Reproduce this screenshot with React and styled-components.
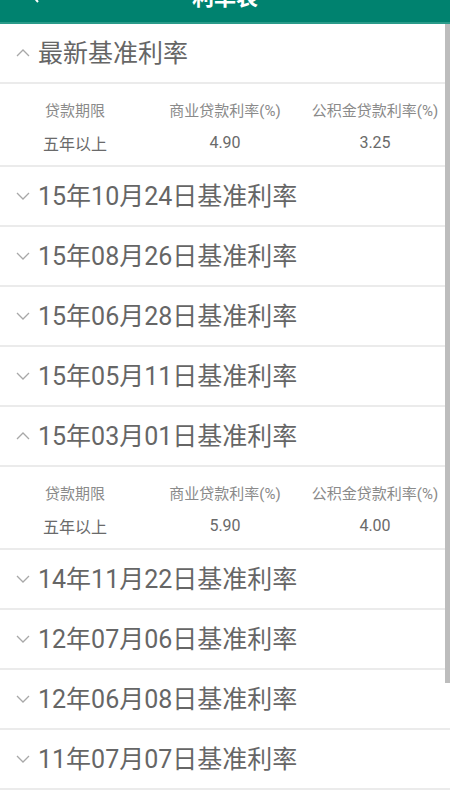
import React from 'react';
import styled, { createGlobalStyle } from 'styled-components';

const GlobalStyle = createGlobalStyle`
  html, body {
    margin: 0;
    padding: 0;
    background: #fff;
  }
  body {
    font-family: Roboto, 'Noto Sans CJK SC', sans-serif;
    overflow: hidden;
  }
`;

const Page = styled.div`
  position: relative;
  width: 450px;
  height: 800px;
  overflow: hidden;
  background: #fff;
`;

// the bar is scrolled mostly out of view, only its bottom shows
const TopBar = styled.div`
  height: 54px;
  margin-top: -32px;
  background: #00826f;
  border-bottom: 2px solid #2a9b8a;
  display: flex;
  align-items: center;
  justify-content: center;
  position: relative;
`;

const TopTitle = styled.div`
  color: #fff;
  font-size: 22px;
  font-weight: 700;
`;

const BackArrow = styled.svg`
  position: absolute;
  left: 30px;
  top: 19px;
`;

const List = styled.div`
  display: flex;
  flex-direction: column;
`;

const GroupHead = styled.div`
  height: 58px;
  display: flex;
  align-items: center;
  padding-left: 16px;
  gap: 8px;
  border-bottom: 2px solid #ebebeb;
`;

const HeadText = styled.span`
  font-size: 25px;
  color: #666;
  line-height: 1;
`;

const Table = styled.div`
  height: 83px;
  display: grid;
  grid-template-columns: 1fr 1fr 1fr;
  grid-template-rows: 33px 33px;
  align-content: start;
  padding-top: 9px;
  box-sizing: border-box;
  border-bottom: 2px solid #ebebeb;
`;

const Cell = styled.div`
  display: flex;
  align-items: center;
  justify-content: center;
  font-size: ${p => (p.head ? '15px' : '16px')};
  color: ${p => (p.head ? '#8a8a8a' : '#6a6a6a')};
  white-space: nowrap;
`;

const Scrollbar = styled.div`
  position: absolute;
  right: 0;
  top: 24px;
  width: 5px;
  height: 659px;
  background: #bdbdbd;
`;

const Chevron = ({ open }) => (
  <svg width="14" height="8" viewBox="0 0 14 8" style={{ flex: 'none' }}>
    <path
      d={open ? 'M1 7 L7 1 L13 7' : 'M1 1 L7 7 L13 1'}
      fill="none"
      stroke="#a8a8a8"
      strokeWidth="1.3"
    />
  </svg>
);

const groups = [
  { title: '最新基准利率', open: true, biz: '4.90', fund: '3.25' },
  { title: '15年10月24日基准利率' },
  { title: '15年08月26日基准利率' },
  { title: '15年06月28日基准利率' },
  { title: '15年05月11日基准利率' },
  { title: '15年03月01日基准利率', open: true, biz: '5.90', fund: '4.00' },
  { title: '14年11月22日基准利率' },
  { title: '12年07月06日基准利率' },
  { title: '12年06月08日基准利率' },
  { title: '11年07月07日基准利率' },
];

export default function App() {
  return (
    <Page>
      <GlobalStyle />
      <TopBar>
        <BackArrow width="10" height="16" viewBox="0 0 10 16">
          <path d="M8 1 L2 8 L8 15" fill="none" stroke="#fff" strokeWidth="2" />
        </BackArrow>
        <TopTitle>利率表</TopTitle>
      </TopBar>
      <List>
        {groups.map(g => (
          <React.Fragment key={g.title}>
            <GroupHead>
              <Chevron open={g.open} />
              <HeadText>{g.title}</HeadText>
            </GroupHead>
            {g.open && (
              <Table>
                <Cell head>贷款期限</Cell>
                <Cell head>商业贷款利率(%)</Cell>
                <Cell head>公积金贷款利率(%)</Cell>
                <Cell>五年以上</Cell>
                <Cell>{g.biz}</Cell>
                <Cell>{g.fund}</Cell>
              </Table>
            )}
          </React.Fragment>
        ))}
      </List>
      <Scrollbar />
    </Page>
  );
}
